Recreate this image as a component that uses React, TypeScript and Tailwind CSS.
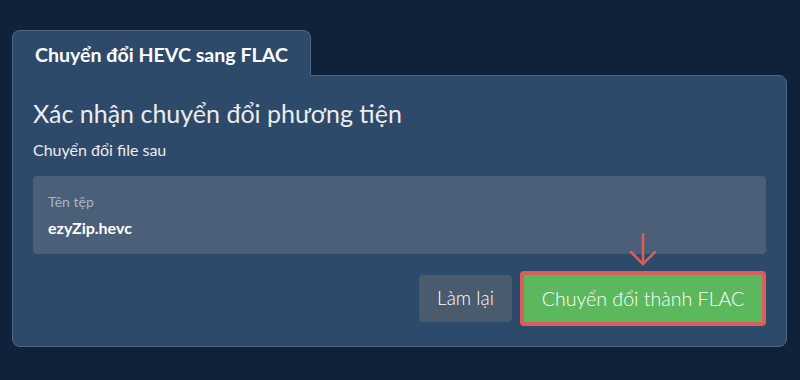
export default function App() {
  return (
    <div
      className="h-[380px] w-[800px] bg-[#10223a] px-3 pt-[30px]"
      style={{ fontFamily: "Lato, 'Noto Sans', sans-serif" }}
    >
      <div className="flex w-[775px] flex-col">
        <div className="relative z-10 -mb-px flex h-[46px] w-[299px] items-center rounded-t-lg border border-b-0 border-[#4d6684] bg-[#2e4a6b] pl-[22px] pt-[3px] text-[19.6px] font-bold text-white">
          Chuyển đổi HEVC sang FLAC
        </div>
        <div className="flex h-[272px] flex-col rounded-tr-lg rounded-b-lg border border-[#4d6684] bg-[#2e4a6b] px-5 pt-[21px]">
          <h1 className="text-[25px] leading-8 text-[#ececec]">Xác nhận chuyển đổi phương tiện</h1>
          <p className="mt-[11px] text-[16px] leading-5 text-[#ececec]">Chuyển đổi file sau</p>
          <div className="mt-[16px] flex h-[78px] flex-col justify-center rounded bg-[#4b5f78] px-[15px]">
            <span className="text-[14px] leading-[18px] text-[#a9b5c4]">Tên tệp</span>
            <span className="mt-[7px] text-[16px] font-bold leading-5 text-white">ezyZip.hevc</span>
          </div>
          <div className="mt-[17px] flex items-center justify-end gap-2">
            <button className="h-[47px] w-[93px] rounded bg-[#4a5b6e] text-[19px] font-light text-white">
              Làm lại
            </button>
            <div className="relative">
              <svg
                className="absolute left-1/2 top-[-38px] -translate-x-1/2"
                width="32"
                height="34"
                viewBox="0 0 32 34"
                fill="none"
                stroke="#d9605a"
                strokeWidth="2.5"
                strokeLinecap="round"
              >
                <line x1="16" y1="1" x2="16" y2="31" />
                <polyline points="4,19 16,31 28,19" />
              </svg>
              <button className="h-[55px] w-[246px] rounded border-4 border-[#d9605a] bg-[#5cb85c] text-[19.6px] font-light text-white">
                Chuyển đổi thành FLAC
              </button>
            </div>
          </div>
        </div>
      </div>
    </div>
  );
}
